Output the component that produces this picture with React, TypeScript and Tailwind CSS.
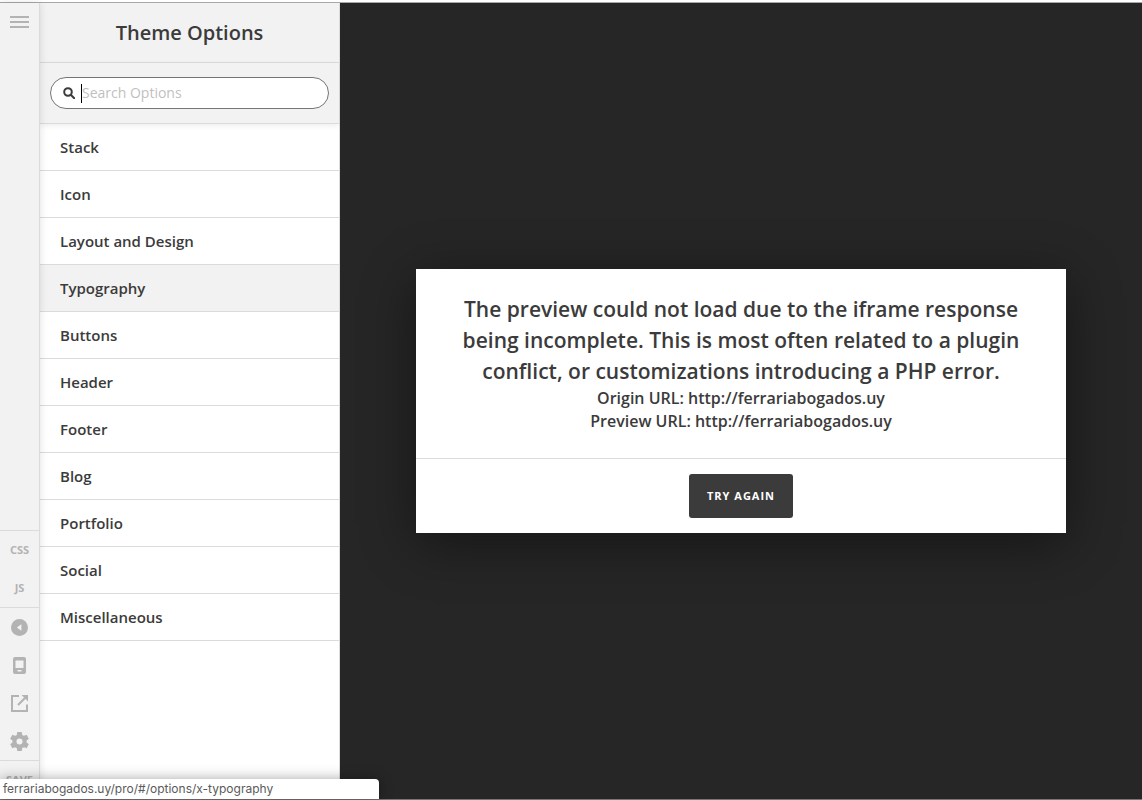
import { useState } from 'react';
import clsx from 'clsx';

const sections = [
  'Stack',
  'Icon',
  'Layout and Design',
  'Typography',
  'Buttons',
  'Header',
  'Footer',
  'Blog',
  'Portfolio',
  'Social',
  'Miscellaneous',
];

const railButton = 'flex h-[38px] w-full items-center justify-center text-[11px] font-bold text-[#b3b3b3]';

function Rail() {
  return (
    <nav aria-label="Tools" className="z-10 flex w-10 shrink-0 flex-col border-r border-[#dbdbdb] bg-[#f2f2f2] shadow-[0_0_8px_rgba(0,0,0,0.12)]">
      <button type="button" aria-label="Menu" className={railButton}>
        <svg width="19" height="12" viewBox="0 0 19 12" fill="currentColor">
          <path d="M0 0h19v2H0zM0 5h19v2H0zM0 10h19v2H0z" />
        </svg>
      </button>

      <div className="mt-auto border-t border-[#dbdbdb]">
        <button type="button" className={railButton}>CSS</button>
        <button type="button" className={railButton}>JS</button>
      </div>

      <div className="border-t border-[#dbdbdb]">
        <button type="button" aria-label="Collapse" className={railButton}>
          <svg width="17" height="17" viewBox="0 0 18 18">
            <circle cx="9" cy="9" r="9" fill="currentColor" />
            <path d="M6.2 9 11 5.6v6.8z" fill="#f2f2f2" />
          </svg>
        </button>
        <button type="button" aria-label="Responsive preview" className={railButton}>
          <svg width="17" height="17" viewBox="0 0 17 17" fill="currentColor">
            <path fillRule="evenodd" d="M4 0h9a2 2 0 0 1 2 2v13a2 2 0 0 1-2 2H4a2 2 0 0 1-2-2V2a2 2 0 0 1 2-2zm.5 3.5V11h8V3.5zM6.5 13v1.6h4V13z" />
          </svg>
        </button>
        <button type="button" aria-label="Open in new tab" className={railButton}>
          <svg width="17" height="17" viewBox="0 0 17 17" fill="none" stroke="currentColor" strokeWidth="2">
            <path d="M8 1H1v15h15V9.5M7 10l7-7" />
            <path d="M10.5 0H17v6.5z" fill="currentColor" stroke="none" />
          </svg>
        </button>
        <button type="button" aria-label="Settings" className={railButton}>
          <svg width="19" height="19" viewBox="2 2 20 20" fill="currentColor">
            <path d="M19.43 12.98c.04-.32.07-.64.07-.98s-.03-.66-.07-.98l2.11-1.65c.19-.15.24-.42.12-.64l-2-3.46c-.12-.22-.39-.3-.61-.22l-2.49 1c-.52-.4-1.08-.73-1.69-.98l-.38-2.65A.49.49 0 0 0 14 2h-4c-.25 0-.46.18-.49.42l-.38 2.65c-.61.25-1.17.59-1.69.98l-2.49-1c-.23-.09-.49 0-.61.22l-2 3.46c-.13.22-.07.49.12.64l2.11 1.65c-.04.32-.07.65-.07.98s.03.66.07.98l-2.11 1.65c-.19.15-.24.42-.12.64l2 3.46c.12.22.39.3.61.22l2.49-1c.52.4 1.08.73 1.69.98l.38 2.65c.03.24.24.42.49.42h4c.25 0 .46-.18.49-.42l.38-2.65c.61-.25 1.17-.59 1.69-.98l2.49 1c.23.09.49 0 .61-.22l2-3.46c.12-.22.07-.49-.12-.64zM12 15.2a3.2 3.2 0 1 1 0-6.4 3.2 3.2 0 0 1 0 6.4z" />
          </svg>
        </button>
      </div>

      <div className="border-t border-[#dbdbdb]">
        <button type="button" className={railButton}>SAVE</button>
      </div>
    </nav>
  );
}

function OptionsPanel() {
  const [active, setActive] = useState('Typography');

  return (
    <aside className="flex w-[300px] shrink-0 flex-col border-r border-[#dbdbdb] bg-white">
      <h1 className="flex h-[60px] items-center justify-center border-b border-[#dbdbdb] bg-[#f2f2f2] text-xl font-semibold">
        Theme Options
      </h1>

      <div className="border-b border-[#dbdbdb] bg-[#f2f2f2] px-2.5 py-3.5 shadow-[0_2px_6px_rgba(0,0,0,0.07)]">
        <label className="flex h-8 items-center gap-1.5 rounded-full border border-[#757575] bg-white px-3">
          <svg width="12" height="12" viewBox="0 0 12 12" fill="none" stroke="currentColor" strokeWidth="2">
            <circle cx="5" cy="5" r="3.8" />
            <path d="m7.8 7.8 3.4 3.4" strokeLinecap="round" />
          </svg>
          <span className="h-[19px] w-px bg-black" />
          <input
            type="text"
            aria-label="Search Options"
            placeholder="Search Options"
            className="-ml-1.5 min-w-0 flex-1 bg-transparent text-sm outline-none placeholder:text-[#bfbfbf]"
          />
        </label>
      </div>

      <ul>
        {sections.map((name) => (
          <li key={name} className="border-b border-[#dbdbdb]">
            <button
              type="button"
              onClick={() => setActive(name)}
              className={clsx(
                'flex h-[46px] w-full items-center px-5 text-[15px] font-semibold',
                name === active && 'bg-[#f2f2f2]'
              )}
            >
              {name}
            </button>
          </li>
        ))}
      </ul>
    </aside>
  );
}

function PreviewError() {
  return (
    <section role="alertdialog" aria-label="Preview error" className="w-full max-w-[650px] bg-white text-center font-semibold shadow-[0_10px_50px_rgba(0,0,0,0.45)]">
      <div className="border-b border-[#dbdbdb] px-10 py-[25px]">
        <h2 className="text-[21px] leading-[31px]">
          The preview could not load due to the iframe response being incomplete. This is most often related to a
          plugin conflict, or customizations introducing a PHP error.
        </h2>
        <p className="text-base leading-[23px]">Origin URL: http://ferrariabogados.uy</p>
        <p className="text-base leading-[23px]">Preview URL: http://ferrariabogados.uy</p>
      </div>
      <div className="flex justify-center py-[15px]">
        <button type="button" className="h-11 rounded-[3px] bg-[#3b3b3b] px-[18px] text-[11px] font-bold tracking-[1px] text-white">
          TRY AGAIN
        </button>
      </div>
    </section>
  );
}

export default function App() {
  return (
    <div className="relative flex h-screen min-h-[700px] flex-col border-b border-[#777] bg-white font-['Open_Sans',sans-serif] text-[#3b3b3b]">
      <div className="h-[3px] shrink-0 border-b border-[#a8a8a8] bg-white" />
      <div className="flex min-h-0 flex-1">
        <Rail />
        <OptionsPanel />
        <main className="flex flex-1 items-center justify-center bg-[#262626]">
          <PreviewError />
        </main>
      </div>

      {/* Browser link status */}
      <div className="absolute bottom-0 left-0 z-20 flex h-5 w-[379px] items-center rounded-tr-[4px] bg-white px-[3px] font-[Inter,sans-serif] text-xs text-[#5a5a5a] shadow-[0_0_14px_rgba(0,0,0,0.35)]">
        ferrariabogados.uy/pro/#/options/x-typography
      </div>
    </div>
  );
}
